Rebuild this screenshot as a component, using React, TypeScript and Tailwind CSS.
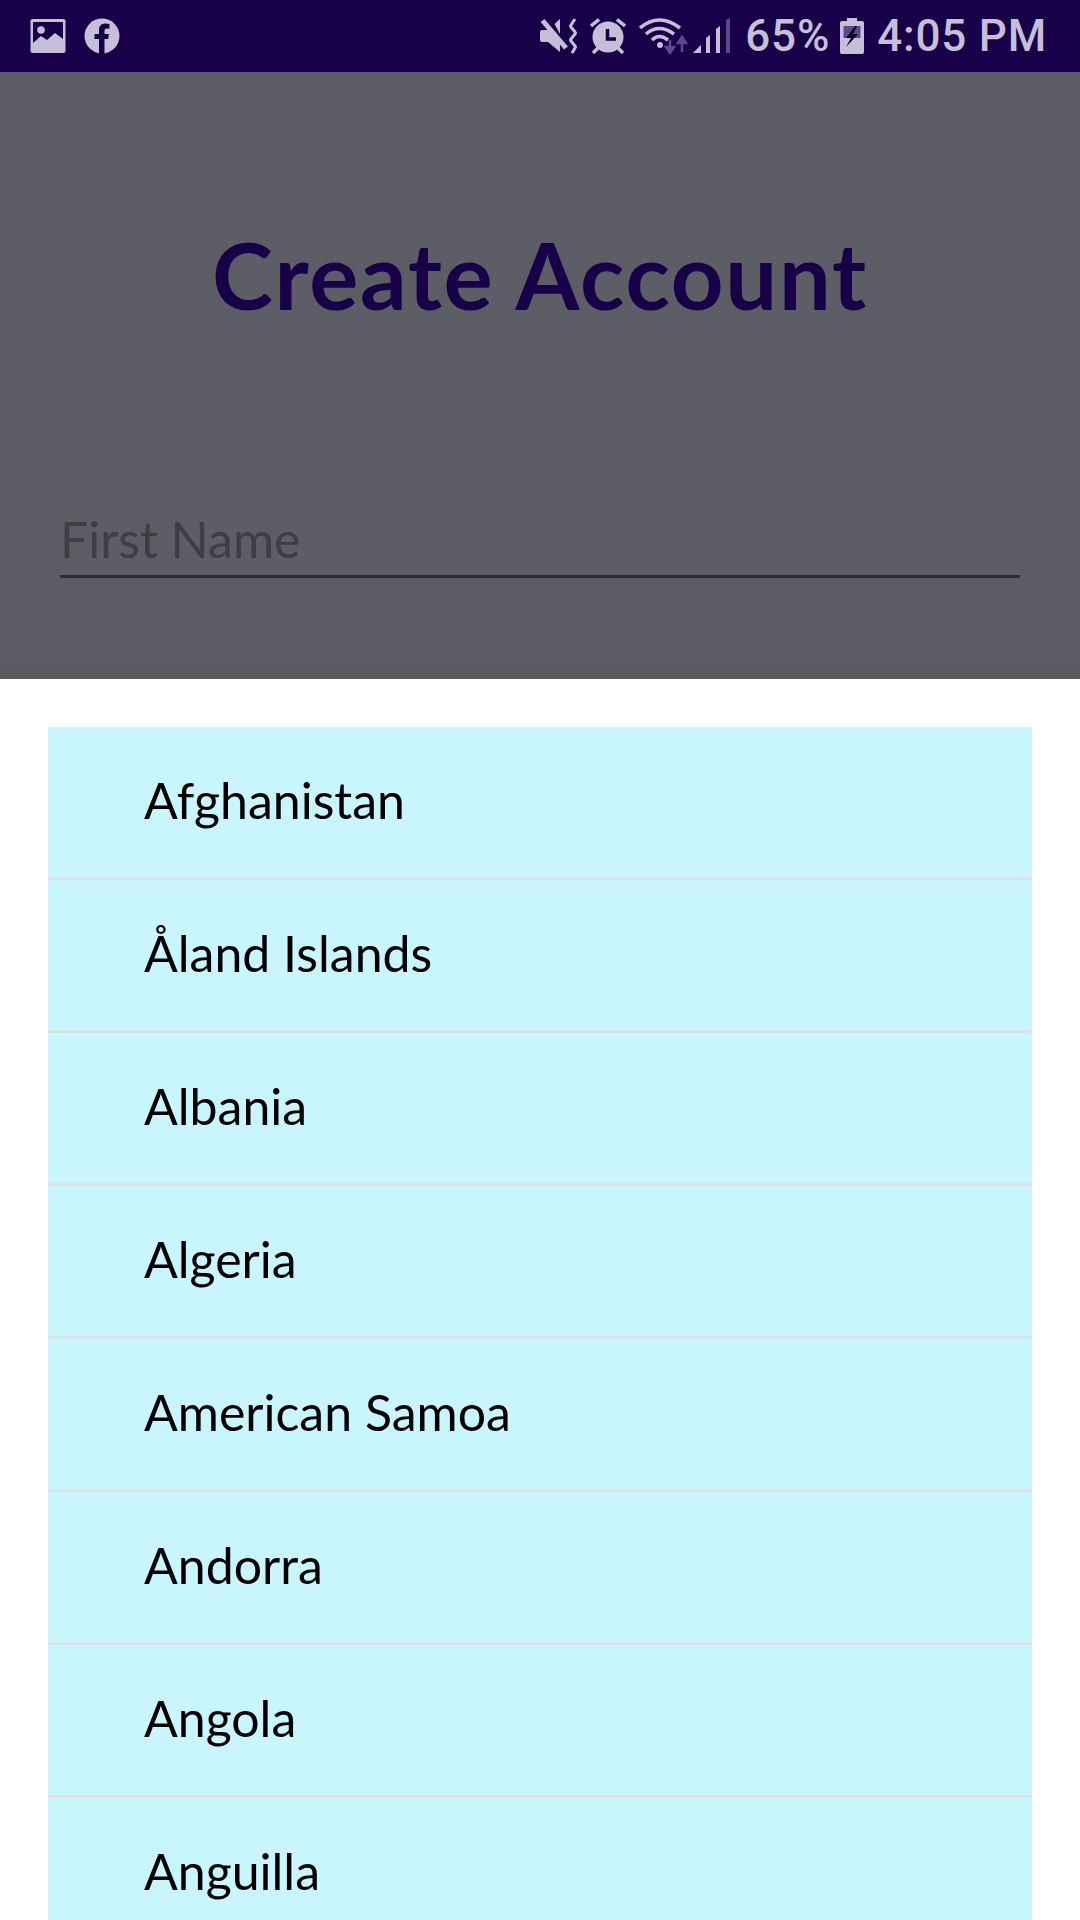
import React from 'react';

const countries = ['Afghanistan', 'Åland Islands', 'Albania', 'Algeria', 'American Samoa', 'Andorra', 'Angola', 'Anguilla'];

function StatusBar() {
  return (
    <div className="h-[72px] bg-[#180048] flex items-center justify-between pl-[30px] pr-[33px] text-[#c5bfd8] shrink-0">
      <div className="flex items-center gap-[18px]">
        {/* picture notification */}
        <svg width="36" height="35" viewBox="0 0 36 35">
          <rect x="0.5" y="0" width="35" height="34" rx="2" fill="#c5bfd8" />
          <rect x="3" y="3" width="30" height="26" fill="#180048" />
          <circle cx="11" cy="11" r="3.8" fill="#c5bfd8" />
          <path d="M3 24 L11 17 L17 21 L25 14 L33 20 V31 H3 Z" fill="#c5bfd8" />
        </svg>
        {/* facebook */}
        <svg width="36" height="36" viewBox="0 0 36 36">
          <circle cx="18" cy="18" r="17.5" fill="#c5bfd8" />
          <path d="M15 36 V21 H10.5 V16 H15 V12 C15 7.5 18 5.5 21.5 5.5 C23 5.5 24.5 5.7 25.5 6 V10.5 H23 C21 10.5 20.5 11.5 20.5 13 V16 H25 L24.2 21 H20.5 V36 Z" fill="#180048" />
        </svg>
      </div>
      <div className="flex items-center">
        {/* muted */}
        <svg width="38" height="36" viewBox="0 0 38 36" className="mr-[13px]">
          <path d="M1 14 Q1 12 3 12 H9 L21 26 V34 L9 24 H3 Q1 24 1 22 Z" fill="#c5bfd8" />
          <path d="M3.5 2.5 L27 30" stroke="#c5bfd8" strokeWidth="5" />
          <path d="M15.5 6 L21 1 V16 Z" fill="#c5bfd8" />
          <path d="M36 1 L32 7 Q31 8 32 9 L36 14 Q37 15 36 16 L32 21 Q31 22 32 23 L36 28 Q37 29 36 30 L33 35" fill="none" stroke="#c5bfd8" strokeWidth="3" />
        </svg>
        {/* alarm */}
        <svg width="36" height="36" viewBox="0 0 36 36" className="mr-[13px]">
          <circle cx="18" cy="19" r="15.5" fill="#c5bfd8" />
          <path d="M1 8 L9 1.5 M35 8 L27 1.5" stroke="#c5bfd8" strokeWidth="3.5" />
          <path d="M3 35 L8 30 M33 35 L28 30" stroke="#c5bfd8" strokeWidth="3.5" />
          <path d="M17.5 11 V21 H26" fill="none" stroke="#180048" strokeWidth="3.5" />
        </svg>
        {/* wifi with arrows */}
        <svg width="49" height="36" viewBox="0 0 49 36" className="mr-[5px]">
          <path d="M1 10 Q20 -6 41 10" fill="none" stroke="#c5bfd8" strokeWidth="3.5" />
          <path d="M7 16 Q20 5 35 16" fill="none" stroke="#c5bfd8" strokeWidth="3.5" />
          <path d="M13 22 Q20 15 29 22" fill="none" stroke="#c5bfd8" strokeWidth="3.5" />
          <circle cx="21" cy="27" r="3" fill="#c5bfd8" />
          <path d="M31 22 V30 M27 29 L31 35 L35 29 Z" stroke="#5d4a8c" strokeWidth="2.5" fill="#5d4a8c" />
          <path d="M43 34 V25 M39 25 L43 19 L47 25 Z" stroke="#5d4a8c" strokeWidth="2.5" fill="#5d4a8c" />
        </svg>
        {/* signal */}
        <svg width="37" height="36" viewBox="0 0 37 36" className="mr-[15px]">
          <path d="M0 35 L8 27 V35 Z" fill="#c5bfd8" />
          <path d="M13 35 V20 L17 17 V35 Z" fill="#c5bfd8" />
          <path d="M23 35 V11 L27 8 V35 Z" fill="#c5bfd8" />
          <path d="M33 35 V2 L37 0 V35 Z" fill="#5d4a8c" />
        </svg>
        <span className="font-['Roboto',sans-serif] font-medium text-[44px] tracking-[0.8px] leading-none w-[82px] mr-[13px]">65%</span>
        {/* battery */}
        <svg width="24" height="36" viewBox="0 0 24 36" className="mr-[13px]">
          <path d="M7 0 H17 V3 H22 Q24 3 24 5 V34 Q24 36 22 36 H2 Q0 36 0 34 V5 Q0 3 2 3 H7 Z" fill="#c5bfd8" />
          <rect x="3.5" y="8" width="17" height="12" fill="#5d4a8c" />
          <path d="M15 8 L6 20 H11 L6 29 L18 16 H13 L17 8 Z" fill="#0b0320" />
        </svg>
        <span className="font-['Roboto',sans-serif] font-medium text-[44px] tracking-[0.8px] leading-none">4:05 PM</span>
      </div>
    </div>
  );
}

export default function App() {
  return (
    <div className="w-[1080px] h-[1920px] overflow-hidden bg-white flex flex-col font-['Lato',sans-serif]">
      <StatusBar />

      {/* dimmed form behind the country sheet */}
      <div className="h-[607px] bg-[#5d5d66] flex flex-col shrink-0">
        <div className="px-[60px] flex flex-col">
          <h1 className="mt-[148px] text-center text-[#180048] text-[92px] leading-[110px] font-bold tracking-[1.8px]">Create Account</h1>
          <div className="mt-[179px] text-[#3e3e45] text-[50px] leading-[60px]">First Name</div>
          <div className="mt-[6px] h-[3px] bg-[#2c2c33]" />
        </div>
        <div className="mt-auto h-[24px] bg-linear-to-b from-[#5d5d66] to-[#58585f]" />
      </div>

      {/* country list */}
      <div className="mt-[48px] mx-[48px] flex flex-col">
        {countries.map(name => (
          <div key={name} className="h-[153px] shrink-0 bg-[#c9f5fc] border-b-[3px] border-[#dde3e5] pl-[96px] flex items-center text-black text-[50px] leading-none pb-[5px]">
            {name}
          </div>
        ))}
      </div>
    </div>
  );
}
